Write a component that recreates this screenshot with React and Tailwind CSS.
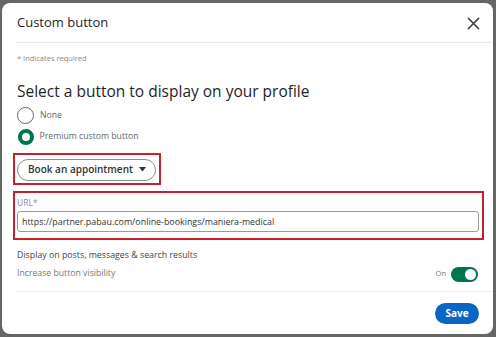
import React from "react";

export default function App() {
  const font = { fontFamily: '"Open Sans", "Noto Sans", sans-serif' };
  return (
    <div className="w-[496px] h-[337px] bg-[#666666] pt-[3px] pl-[2px] pr-[3px] pb-[3px]" style={font}>
      <div className="w-full h-full bg-white rounded-[8px] flex flex-col overflow-hidden">
        <div className="ml-[14px] h-[40px] border-b border-[#e8e8e8] flex items-center justify-between pr-[13px]">
          <span className="text-[13px] text-[#1f1f1f] pl-[1px] pt-[1px] whitespace-nowrap">Custom button</span>
          <svg width="13" height="13" viewBox="0 0 14 14" className="mt-[1px]">
            <path d="M1.5 1.5 L12.5 12.5 M12.5 1.5 L1.5 12.5" stroke="#444" strokeWidth="1.6" strokeLinecap="round" />
          </svg>
        </div>
        <div className="pl-[15px] pr-[14px] flex flex-col">
          <div className="text-[7.5px] text-[#8a8a8a] mt-[9px] h-[12px] leading-[12px]">* Indicates required</div>
          <div className="text-[15.5px] text-[#1f1f1f] mt-[16px] leading-[22px] h-[22px] whitespace-nowrap">Select a button to display on your profile</div>
          <div className="flex items-center gap-[6px] mt-[5px] h-[17px]">
            <span className="w-[17px] h-[17px] rounded-full border border-[#666] box-border" />
            <span className="text-[8.7px] text-[#666]">None</span>
          </div>
          <div className="flex items-center gap-[6px] mt-[4px] h-[17px]">
            <span className="w-[16px] h-[16px] ml-[0.5px] rounded-full border-[4px] border-[#01754f] box-border bg-white" />
            <span className="text-[8.7px] text-[#666] whitespace-nowrap">Premium custom button</span>
          </div>
          <div className="mt-[8px] -ml-[4px] w-[148px] h-[32px] border-2 border-[#c9202f] flex items-center pl-[2px]">
            <div className="h-[22px] w-[139px] rounded-full border border-[#8c8c8c] flex items-center pl-[10px] gap-[6px] mt-[1px]">
              <span className="text-[10px] font-semibold text-[#333] whitespace-nowrap">Book an appointment</span>
              <svg width="7" height="5" viewBox="0 0 7 5"><path d="M0 0 H7 L3.5 4.5 Z" fill="#333" /></svg>
            </div>
          </div>
          <div className="mt-[6px] -ml-[4px] w-[471px] h-[49px] border-2 border-[#c9202f] flex flex-col pl-[2px] pr-[3px]">
            <span className="text-[8.5px] text-[#8c8c8c] leading-[12px] h-[12px] mt-[4px]">URL*</span>
            <div className="mt-[2px] h-[21px] border border-[#999] rounded-[3px] flex items-center pl-[4px]">
              <span className="text-[8.9px] text-[#333] whitespace-nowrap">https://partner.pabau.com/online-bookings/maniera-medical</span>
            </div>
          </div>
          <div className="mt-[8px] text-[8.8px] text-[#444] leading-[14px] h-[14px] whitespace-nowrap">Display on posts, messages &amp; search results</div>
          <div className="mt-[3px] flex items-center justify-between h-[18px] pr-[1px]">
            <span className="text-[8.7px] text-[#777] whitespace-nowrap">Increase button visibility</span>
            <div className="flex items-center gap-[5px]">
              <span className="text-[7.5px] text-[#777]">On</span>
              <div className="w-[27px] h-[15px] rounded-full bg-[#01754f] flex items-center justify-end pr-[2px]">
                <span className="w-[11px] h-[11px] rounded-full bg-white" />
              </div>
            </div>
          </div>
        </div>
        <div className="ml-[14px] mt-[8px] border-b border-[#eeeeee]" />
        <div className="flex justify-end pr-[14px] mt-[11px]">
          <div className="w-[44px] h-[21px] rounded-full bg-[#0a66c2] flex items-center justify-center">
            <span className="text-[10px] font-bold text-white">Save</span>
          </div>
        </div>
      </div>
    </div>
  );
}
